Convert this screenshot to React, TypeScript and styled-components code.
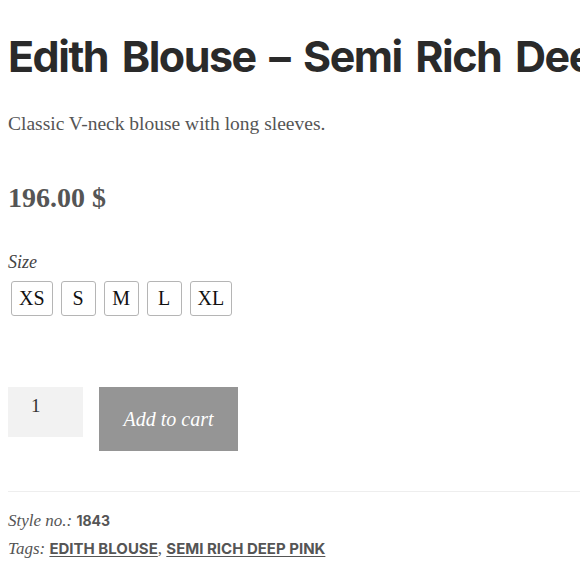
import styled, { createGlobalStyle } from "styled-components";

const GlobalStyle = createGlobalStyle`
  html, body {
    margin: 0;
    padding: 0;
    background: #fff;
    overflow: hidden;
  }
  body {
    font-family: "Liberation Serif", "DejaVu Serif", serif;
    color: #555;
  }
`;

const Product = styled.div`
  width: 580px;
  height: 580px;
  box-sizing: border-box;
  padding: 28px 0 0 8px;
  overflow: hidden;
  display: flex;
  flex-direction: column;
`;

const Title = styled.h1`
  margin: 0;
  font-family: Inter, "Liberation Sans", sans-serif;
  font-weight: 700;
  font-size: 43px;
  line-height: 56px;
  color: #2a2a2a;
  white-space: nowrap;
  letter-spacing: -1.5px;
  word-spacing: 5px;
`;

const Description = styled.p`
  margin: 28px 0 0;
  font-size: 19.5px;
  line-height: 24px;
  color: #555;
`;

const Price = styled.div`
  margin-top: 45px;
  font-size: 28px;
  font-weight: 700;
  line-height: 34px;
  color: #555;
`;

const Label = styled.div`
  margin-top: 36px;
  font-style: italic;
  font-size: 18px;
  line-height: 22px;
  color: #444;
`;

const SizeRow = styled.div`
  display: flex;
  gap: 8px;
  margin: 8px 0 0 3px;
`;

const SizeButton = styled.button`
  height: 35px;
  min-width: 35px;
  box-sizing: border-box;
  padding: 0 7px;
  border: 1px solid #b5b5b5;
  border-radius: 3px;
  background: #fff;
  font-family: "Liberation Serif", serif;
  font-size: 20px;
  color: #111;
  cursor: pointer;
`;

const CartRow = styled.div`
  display: flex;
  align-items: flex-start;
  gap: 16px;
  margin-top: 71px;
`;

const Qty = styled.input`
  width: 75px;
  height: 50px;
  box-sizing: border-box;
  border: none;
  background: #f2f2f2;
  padding: 0 0 12px 23px;
  font-family: "Liberation Serif", serif;
  font-size: 19px;
  color: #333;
  outline: none;
`;

const CartButton = styled.button`
  width: 139px;
  height: 64px;
  border: none;
  background: #959595;
  color: #fff;
  font-family: "Liberation Serif", serif;
  font-style: italic;
  font-size: 20px;
  cursor: pointer;
`;

const Divider = styled.hr`
  margin: 40px 0 0;
  border: none;
  border-top: 1px solid #eee;
`;

const Meta = styled.div`
  margin-top: 17px;
  display: flex;
  flex-direction: column;
  gap: 4px;
`;

const MetaLine = styled.div`
  font-size: 17px;
  line-height: 24px;
  color: #555;
`;

const MetaKey = styled.span`
  font-style: italic;
`;

const MetaValue = styled.span`
  font-family: Inter, "Liberation Sans", sans-serif;
  font-weight: 700;
  font-size: 14px;
  color: #555;
`;

const TagLink = styled.a`
  font-family: Inter, "Liberation Sans", sans-serif;
  font-weight: 700;
  font-size: 15px;
  color: #555;
  text-transform: uppercase;
  text-decoration: underline;
  text-underline-offset: 2px;
`;

const sizes = ["XS", "S", "M", "L", "XL"];

export default function App() {
  return (
    <>
      <GlobalStyle />
      <Product>
        <Title>Edith Blouse – Semi Rich Deep Pink</Title>
        <Description>Classic V-neck blouse with long sleeves.</Description>
        <Price>196.00 $</Price>
        <Label>Size</Label>
        <SizeRow>
          {sizes.map((s) => (
            <SizeButton key={s}>{s}</SizeButton>
          ))}
        </SizeRow>
        <CartRow>
          <Qty type="text" defaultValue="1" />
          <CartButton>Add to cart</CartButton>
        </CartRow>
        <Divider />
        <Meta>
          <MetaLine>
            <MetaKey>Style no.:</MetaKey> <MetaValue>1843</MetaValue>
          </MetaLine>
          <MetaLine>
            <MetaKey>Tags:</MetaKey> <TagLink href="#">Edith Blouse</TagLink>,{" "}
            <TagLink href="#">Semi Rich Deep Pink</TagLink>
          </MetaLine>
        </Meta>
      </Product>
    </>
  );
}
